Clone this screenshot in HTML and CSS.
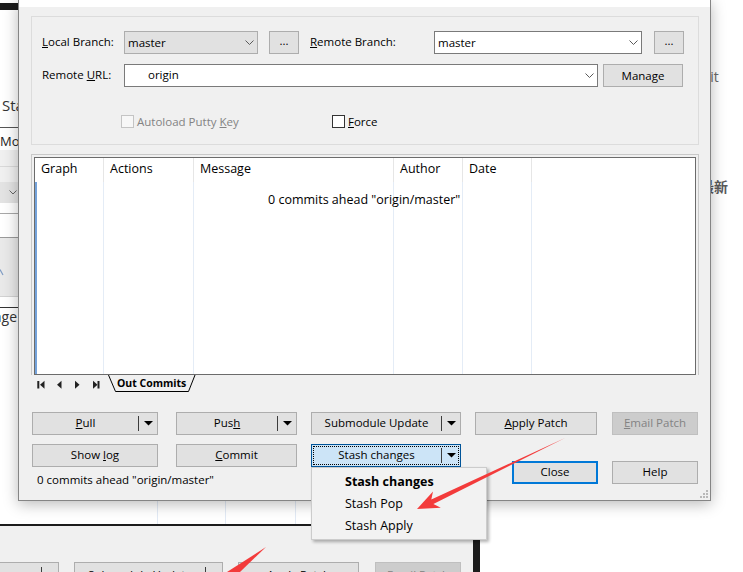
FILE: index.html
```html
<!DOCTYPE html>
<html lang="en">
<head>
<meta charset="utf-8">
<title>Push</title>
<link rel="stylesheet" href="styles.css">
</head>
<body>
<div class="stage">

  <div class="back-win">
    <div class="bw-head">Stash changes</div>
    <div class="bw-mod">Modified files</div>
    <div class="bw-r1"></div>
    <div class="bw-r2"></div>
    <div class="bw-combo"><svg width="8" height="5" viewBox="0 0 8 5"><path d="M0.5 0.5L4 4L7.5 0.5" fill="none" stroke="#666"/></svg></div>
    <div class="bw-r3"></div>
    <div class="bw-r4"></div>
    <div class="bw-r5"><svg class="bw-mark" width="4" height="7" viewBox="0 0 4 7"><path d="M0 0.5L3 6" fill="none" stroke="#7f9cc4" stroke-width="1.2"/></svg></div>
    <div class="bw-r6"></div>
    <div class="bw-list">
      <div class="bw-col bw-c1"><div class="bw-msg"><span>Message</span></div></div>
      <div class="bw-col bw-c2"></div>
      <div class="bw-col bw-c3"></div>
      <div class="bw-col bw-c4"></div>
    </div>
    <div class="bw-sep"></div>
    <div class="bw-toolbar">
      <div class="btn split bwb1"><span class="split-main"><span>Push</span></span><span class="split-sep"></span><span class="split-arr sm"><svg width="9" height="5" viewBox="0 0 9 5"><path d="M0 0H9L4.5 4.5Z" fill="#000"/></svg></span></div>
      <div class="btn split bwb2"><span class="split-main"><span>Submodule Update</span></span><span class="split-sep"></span><span class="split-arr sm"><svg width="9" height="5" viewBox="0 0 9 5"><path d="M0 0H9L4.5 4.5Z" fill="#000"/></svg></span></div>
      <div class="btn bwb3"><span>Apply Patch</span></div>
      <div class="btn disabled bwb4"><span>Email Patch</span></div>
    </div>
  </div>

  <div class="back-right">
    <div class="br-git">Git</div>
    <div class="br-new">最新</div>
  </div>

  <div class="dialog">
    <div class="dlg-title"></div>
    <div class="dlg-body">
      <div class="groupbox">
        <div class="gb-row row1">
          <div class="lbl"><u>L</u>ocal Branch:</div>
          <div class="combo combo-list cw-local"><span class="ctext">master</span><svg class="chev" width="9" height="5" viewBox="0 0 9 5"><path d="M0.5 0.5L4.5 4.5L8.5 0.5" fill="none" stroke="#5a5a5a"/></svg></div>
          <div class="btn btn-dots"><span>...</span></div>
          <div class="lbl lbl-b"><u>R</u>emote Branch:</div>
          <div class="combo combo-edit cw-remote"><span class="ctext">master</span><svg class="chev" width="9" height="5" viewBox="0 0 9 5"><path d="M0.5 0.5L4.5 4.5L8.5 0.5" fill="none" stroke="#5a5a5a"/></svg></div>
          <div class="btn btn-dots btn-dots2"><span>...</span></div>
        </div>
        <div class="gb-row row2">
          <div class="lbl">Remote <u>U</u>RL:</div>
          <div class="combo combo-edit cw-url"><span class="ctext ctext-url">origin</span><svg class="chev" width="9" height="5" viewBox="0 0 9 5"><path d="M0.5 0.5L4.5 4.5L8.5 0.5" fill="none" stroke="#5a5a5a"/></svg></div>
          <div class="btn btn-manage"><span>Manage</span></div>
        </div>
        <div class="gb-row row3">
          <div class="chk-item chk-auto"><span class="chk chk-dis"></span><span class="chk-lbl dis">Autoload Putty <u>K</u>ey</span></div>
          <div class="chk-item"><span class="chk"></span><span class="chk-lbl"><u>F</u>orce</span></div>
        </div>
      </div>

      <div class="grid-outer">
        <div class="grid-inner">
          <div class="gcol gc1"><div class="gh">Graph</div><div class="gb gb-graph"></div></div>
          <div class="gcol gc2"><div class="gh">Actions</div><div class="gb"></div></div>
          <div class="gcol gc3"><div class="gh">Message</div><div class="gb"><div class="gmsg">0 commits ahead "origin/master"</div></div></div>
          <div class="gcol gc4"><div class="gh">Author</div><div class="gb"></div></div>
          <div class="gcol gc5"><div class="gh">Date</div><div class="gb"></div></div>
          <div class="gcol gc6"><div class="gh"></div><div class="gb"></div></div>
        </div>
      </div>

      <div class="tabstrip">
        <svg class="tabnav" width="77" height="17" viewBox="0 0 77 17">
          <rect x="6.3" y="6" width="2" height="7.5" fill="#222"/>
          <polygon points="9,9.7 13.5,5.7 13.5,13.7" fill="#222"/>
          <polygon points="26,9.7 30.5,5.7 30.5,13.7" fill="#222"/>
          <polygon points="44,5.7 48.5,9.7 44,13.7" fill="#222"/>
          <polygon points="62,5.7 66.5,9.7 62,13.7" fill="#222"/>
          <rect x="66.5" y="6" width="2" height="7.5" fill="#222"/>
        </svg>
        <div class="tab">
          <svg class="tab-shape" width="88" height="17" viewBox="0 0 88 17"><polyline points="0.5,0 7.5,16.5 80.5,16.5 87,0" fill="none" stroke="#000" stroke-width="1"/></svg>
          <span class="tab-text">Out Commits</span>
        </div>
      </div>

      <div class="btn-grid">
        <div class="btn split b-pull"><span class="split-main"><span><u>P</u>ull</span></span><span class="split-sep"></span><span class="split-arr"><svg width="9" height="5" viewBox="0 0 9 5"><path d="M0 0H9L4.5 4.5Z" fill="#000"/></svg></span></div>
        <div class="btn split b-push"><span class="split-main"><span>Pus<u>h</u></span></span><span class="split-sep"></span><span class="split-arr"><svg width="9" height="5" viewBox="0 0 9 5"><path d="M0 0H9L4.5 4.5Z" fill="#000"/></svg></span></div>
        <div class="btn split b-sub"><span class="split-main"><span>Submodule Update</span></span><span class="split-sep"></span><span class="split-arr"><svg width="9" height="5" viewBox="0 0 9 5"><path d="M0 0H9L4.5 4.5Z" fill="#000"/></svg></span></div>
        <div class="btn b-apply"><span><u>A</u>pply Patch</span></div>
        <div class="btn disabled b-email"><span><u>E</u>mail Patch</span></div>
        <div class="btn b-log"><span>Show <u>l</u>og</span></div>
        <div class="btn b-commit"><span><u>C</u>ommit</span></div>
        <div class="btn split focused b-stash"><span class="split-main"><span>Stash changes</span></span><span class="split-sep"></span><span class="split-arr"><svg width="9" height="5" viewBox="0 0 9 5"><path d="M0 0H9L4.5 4.5Z" fill="#000"/></svg></span></div>
        <div class="btn default b-close"><span>Close</span></div>
        <div class="btn b-help"><span>Help</span></div>
        <div class="status">0 commits ahead "origin/master"</div>
      </div>
    </div>
    <svg class="grip" width="9" height="9" viewBox="0 0 9 9">
      <rect x="6" y="0" width="2" height="2" fill="#b8b8b8"/>
      <rect x="3" y="3" width="2" height="2" fill="#b8b8b8"/>
      <rect x="6" y="3" width="2" height="2" fill="#b8b8b8"/>
      <rect x="0" y="6" width="2" height="2" fill="#b8b8b8"/>
      <rect x="3" y="6" width="2" height="2" fill="#b8b8b8"/>
      <rect x="6" y="6" width="2" height="2" fill="#b8b8b8"/>
    </svg>
  </div>

  <div class="popup">
    <div class="mi mi-bold">Stash changes</div>
    <div class="mi">Stash Pop</div>
    <div class="mi">Stash Apply</div>
  </div>

  <svg class="annot" width="743" height="572" viewBox="0 0 743 572">
    <polygon points="565,438 431.3,499.4 433,491.5 417,509 440.8,507.7 433.4,504" fill="#f33b3b"/>
    <polygon points="266,547 227,572 240,572" fill="#f33b3b"/>
  </svg>
</div>
</body>
</html>
```

FILE: styles.css
```css
* { box-sizing: border-box; }
html, body { margin: 0; padding: 0; }
body {
  background: #fff;
  font-family: "Open Sans", "Noto Sans", sans-serif;
  font-size: 11.5px;
  color: #000;
}
u { text-decoration: underline; text-underline-offset: 1px; }

.stage {
  position: relative;
  width: 743px;
  height: 572px;
  overflow: hidden;
  background: #fff;
}

/* ---------- background window ---------- */
.back-win {
  position: absolute;
  left: 0;
  top: 3px;
  width: 480px;
  height: 569px;
  border-top: 7px solid #1c1c1c;
  border-right: 7px solid #1c1c1c;
  background: #fff;
  display: flex;
  flex-direction: column;
  overflow: hidden;
  z-index: 0;
}
.bw-head {
  flex: none;
  height: 118px;
  padding: 85px 0 0 2px;
  font-size: 15px;
  line-height: 20px;
  color: #333;
  white-space: nowrap;
  border-bottom: 1px solid #555;
}
.bw-mod {
  flex: none;
  height: 22px;
  padding-top: 4px;
  font-size: 13px;
  line-height: 18px;
  color: #222;
  white-space: nowrap;
}
.bw-r1 { flex: none; height: 17px; background: #f0f0f0; border-bottom: 1px solid #d9d9d9; }
.bw-r2 { flex: none; height: 15px; background: #f0f0f0; }
.bw-combo {
  flex: none;
  height: 21px;
  background: #e3e3e3;
  display: flex;
  align-items: center;
  padding-left: 9px;
}
.bw-r3 { flex: none; height: 11px; border-bottom: 1px solid #a8a8a8; }
.bw-r4 { flex: none; height: 24px; border-bottom: 1px solid #9a9a9a; }
.bw-r5 { flex: none; height: 59px; background: #e9e9e9; border-bottom: 1px solid #d2d2d2; padding-top: 31px; }
.bw-mark { display: block; }
.bw-r6 { flex: none; height: 11px; border-bottom: 1px solid #333; }
.bw-list { flex: none; height: 216px; display: flex; }
.bw-col { flex: none; border-right: 1px solid #e2eaf5; }
.bw-c1 { width: 158px; }
.bw-c2 { width: 68px; }
.bw-c3 { width: 70px; }
.bw-c4 { flex: 1; border-right: none; }
.bw-msg {
  width: 17px;
  display: flex;
  justify-content: flex-end;
  font-size: 14px;
  line-height: 18px;
  color: #333;
  white-space: nowrap;
}
.bw-sep { flex: none; height: 2px; background: #1c1c1c; }
.bw-toolbar {
  flex: 1;
  background: #f0f0f0;
  display: flex;
  align-items: flex-start;
  padding-top: 36px;
}
.bw-toolbar .btn, .bw-toolbar .split-main { padding-bottom: 0; padding-top: 1px; }
.bwb1 { width: 121px; margin-left: -62px; }
.bwb2 { width: 149px; margin-left: 15px; }
.bwb3 { width: 121px; margin-left: 15px; border-color: #8aa6c4; }
.bwb4 { width: 86px; margin-left: 16px; }
.split-arr.sm { width: 16px; }

/* ---------- right background ---------- */
.back-right {
  position: absolute;
  left: 600px;
  top: 0;
  width: 143px;
  height: 572px;
  color: #6a6a6a;
  z-index: 0;
}
.br-git { padding: 67px 0 0 100px; font-size: 14px; line-height: 20px; }
.br-new {
  margin-top: 91px;
  padding-left: 100px;
  font-family: "Noto Sans CJK SC", sans-serif;
  font-weight: 700;
  font-size: 14px;
  line-height: 16px;
  color: #5a5a5a;
}

/* ---------- dialog ---------- */
.dialog {
  position: absolute;
  left: 18px;
  top: 0;
  width: 693px;
  height: 501px;
  background: #f0f0f0;
  border: 1px solid #858585;
  border-top: none;
  box-shadow: 0 3px 14px rgba(0, 0, 0, 0.28);
  z-index: 2;
}
.dlg-title { height: 7px; background: #fff; }
.dlg-body { padding: 9px 11px 0 12px; }

.groupbox {
  height: 129px;
  border: 1px solid #dcdcdc;
  padding: 14px 0 0 10px;
}
.gb-row { display: flex; align-items: center; }
.row1 { height: 23px; }
.row2 { height: 24px; margin-top: 9px; }
.row3 { height: 17px; margin-top: 26px; }
.lbl { flex: none; width: 82px; white-space: nowrap; padding-bottom: 2px; }
.lbl-b { width: 124px; margin-left: 11px; }

.combo {
  flex: none;
  height: 23px;
  display: flex;
  align-items: center;
  padding: 0 3px 1px 3px;
}
.combo-list { background: #e1e1e1; border: 1px solid #adadad; }
.combo-edit { background: #fff; border: 1px solid #7a7a7a; }
.ctext { flex: 1; white-space: nowrap; }
.ctext-url { padding-left: 20px; }
.chev { flex: none; display: block; margin-top: 1px; }
.cw-local { width: 134px; }
.cw-remote { width: 208px; }
.cw-url { width: 474px; }

.btn {
  flex: none;
  height: 23px;
  background: #e1e1e1;
  border: 1px solid #adadad;
  display: flex;
  align-items: center;
  justify-content: center;
  white-space: nowrap;
  padding-bottom: 3px;
}
.btn-dots { width: 30px; margin-left: 11px; padding-bottom: 4px; }
.btn-dots2 { margin-left: 12px; }
.btn-manage { width: 80px; margin-left: 5px; margin-top: 1px; padding-bottom: 1px; }

.chk-item { flex: none; display: flex; align-items: center; }
.chk-auto { width: 211px; margin-left: 79px; }
.chk { width: 13px; height: 13px; background: #fff; border: 1px solid #333; flex: none; }
.chk-dis { border-color: #c4c4c4; background: #f7f7f7; }
.chk-lbl { margin-left: 3px; white-space: nowrap; }
.dis { color: #838383; }

/* grid */
.grid-outer {
  height: 221px;
  margin-top: 9px;
  border: 1px solid #c9c9c9;
  border-bottom: none;
  padding: 2px 2px 0;
}
.grid-inner {
  height: 218px;
  border: 1px solid #6b6b6b;
  background: #fff;
  display: flex;
}
.gcol { flex: none; display: flex; flex-direction: column; }
.gc1 { width: 69px; }
.gc2 { width: 90px; }
.gc3 { width: 200px; }
.gc4 { width: 69px; }
.gc5 { width: 69px; }
.gc6 { flex: 1; }
.gh {
  height: 24px;
  line-height: 21px;
  padding-left: 6px;
  font-size: 12.5px;
  white-space: nowrap;
  border-right: 1px solid #e6e6e6;
}
.gb { flex: 1; border-right: 1px solid #e4ecf6; }
.gc6 .gh, .gc6 .gb { border-right: none; }
.gb-graph { border-left: 2px solid #74a2da; }
.gmsg {
  padding: 7px 0 0 74px;
  font-size: 12.5px;
  line-height: 21px;
  white-space: nowrap;
}

/* tabs */
.tabstrip { height: 17px; display: flex; }
.tabnav { flex: none; display: block; }
.tab { position: relative; flex: none; width: 88px; height: 17px; }
.tab-shape { position: absolute; left: 0; top: 0; }
.tab-text {
  position: relative;
  display: block;
  padding-left: 9px;
  font-weight: 700;
  font-size: 10.5px;
  line-height: 17px;
  white-space: nowrap;
}

/* buttons */
.btn-grid {
  display: grid;
  grid-template-columns: 144px 135px 164px 137px 86px;
  grid-template-rows: 23px 23px 14px;
  row-gap: 9px;
  margin: 20px 0 0 1px;
  justify-items: start;
}
.split { justify-content: flex-start; align-items: stretch; padding-bottom: 0; }
.split-main { flex: 1; display: flex; align-items: center; justify-content: center; padding-bottom: 3px; }
.split-sep { flex: none; width: 1px; background: #3c3c3c; margin: 3px 0; }
.split-arr { flex: none; width: 18px; display: flex; align-items: center; justify-content: center; }
.split-arr svg { display: block; }

.b-pull, .b-log { width: 126px; }
.b-push, .b-commit { width: 121px; }
.b-sub, .b-stash { width: 150px; }
.b-apply { width: 122px; }
.b-email, .b-help { width: 86px; }
.b-close { width: 86px; grid-column: 4; grid-row: 2 / 4; margin: 17px 0 0 37px; }
.b-help { grid-column: 5; grid-row: 2 / 4; margin-top: 17px; }
.status { grid-column: 1 / 4; grid-row: 3; margin: -3px 0 0 5px; white-space: nowrap; line-height: 14px; }

.disabled { background: #cccccc; border-color: #bfbfbf; color: #838383; }
.focused {
  background: #cce4f7;
  border-color: #005499;
  outline: 1px dotted #000;
  outline-offset: -3px;
}
.default { border: 2px solid #0078d7; }

.grip { position: absolute; right: 1px; bottom: 1px; display: block; }

/* popup menu */
.popup {
  position: absolute;
  left: 311px;
  top: 467px;
  width: 176px;
  height: 73px;
  background: #f2f2f2;
  border: 1px solid #cccccc;
  box-shadow: 2px 2px 3px rgba(0, 0, 0, 0.3);
  padding-top: 3px;
  font-size: 12.5px;
  z-index: 3;
}
.mi { height: 22px; line-height: 22px; padding-left: 33px; white-space: nowrap; }
.mi-bold { font-weight: 700; }

.annot {
  position: absolute;
  left: 0;
  top: 0;
  z-index: 4;
  pointer-events: none;
}
```
